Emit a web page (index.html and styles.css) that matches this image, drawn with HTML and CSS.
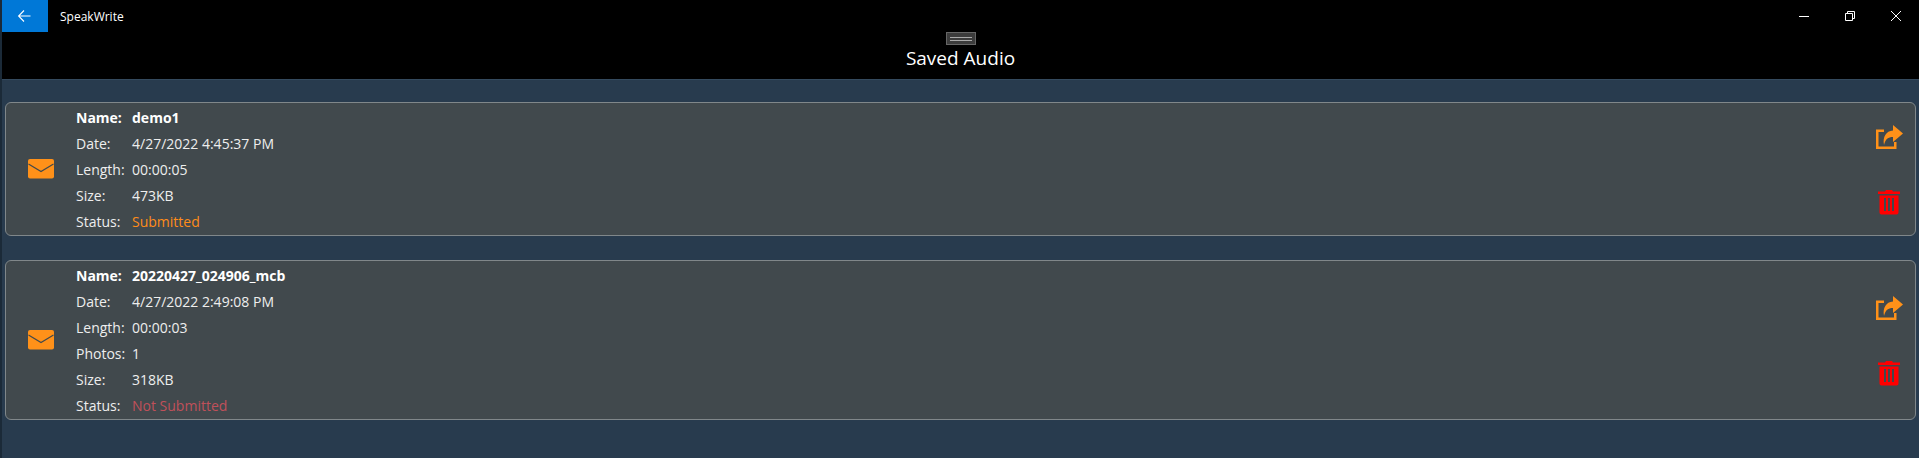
FILE: index.html
```html
<!DOCTYPE html>
<html lang="en">
<head>
<meta charset="utf-8">
<title>SpeakWrite</title>
<link rel="stylesheet" href="styles.css">
</head>
<body>
<div class="app">
  <header class="header">
    <div class="titlebar">
      <button class="back" aria-label="Back">
        <svg width="16" height="16" viewBox="0 0 16 16"><path d="M7 2.5 1.6 8 7 13.5M1.8 8H13.5" fill="none" stroke="#fff" stroke-width="1.1"/></svg>
      </button>
      <span class="app-name">SpeakWrite</span>
      <div class="win-controls">
        <svg class="win-icon" width="12" height="12" viewBox="0 0 12 12"><path d="M1 6.5H11" stroke="#fff" stroke-width="1"/></svg>
        <svg class="win-icon" width="12" height="12" viewBox="0 0 12 12"><path d="M1.5 3.5H8.5V10.5H1.5ZM3.5 3.5V1.5H10.5V8.5H8.5" fill="none" stroke="#fff" stroke-width="1"/></svg>
        <svg class="win-icon" width="12" height="12" viewBox="0 0 12 12"><path d="M1 1 11 11M11 1 1 11" stroke="#fff" stroke-width="1"/></svg>
      </div>
    </div>
    <div class="page-head">
      <div class="grip"><span class="grip-lines"></span></div>
      <h1 class="page-title">Saved Audio</h1>
    </div>
  </header>
  <main class="list">
    <section class="card">
      <div class="mail">
        <svg width="26" height="20" viewBox="0 0 26 20"><rect width="26" height="19.5" rx="2" fill="#ff9119"/><path d="M0.5 5 13 12.5 25.5 5" fill="none" stroke="#41494d" stroke-width="1.2"/></svg>
      </div>
      <dl class="info">
        <div class="row strong"><dt>Name:</dt><dd>demo1</dd></div>
        <div class="row"><dt>Date:</dt><dd>4/27/2022 4:45:37 PM</dd></div>
        <div class="row"><dt>Length:</dt><dd>00:00:05</dd></div>
        <div class="row"><dt>Size:</dt><dd>473KB</dd></div>
        <div class="row"><dt>Status:</dt><dd class="ok">Submitted</dd></div>
      </dl>
      <div class="actions">
        <svg class="share" width="30" height="26" viewBox="0 0 30 26"><path d="M2 5.5H10V8H4.5V22.5H20V18H22.500V25H2Z" fill="#ff9119"/><path d="M19 1 29 9.500 19 18V13C14 13 11.500 15 10 21 8.500 13 12 7 19 6.500Z" fill="#ff9119"/></svg>
        <svg class="trash" width="22" height="26" viewBox="0 0 22 26"><path d="M8 1H14L15 2.500H22V5H0V2.500H7ZM1.500 6.500H20.500V23.500Q20.500 25.500 18.500 25.500H3.500Q1.500 25.500 1.500 23.500ZM6 9V22H8V9ZM10 9V22H12V9ZM14 9V22H16V9Z" fill="#f00" fill-rule="evenodd"/></svg>
      </div>
    </section>
    <section class="card">
      <div class="mail">
        <svg width="26" height="20" viewBox="0 0 26 20"><rect width="26" height="19.5" rx="2" fill="#ff9119"/><path d="M0.5 5 13 12.5 25.5 5" fill="none" stroke="#41494d" stroke-width="1.2"/></svg>
      </div>
      <dl class="info">
        <div class="row strong"><dt>Name:</dt><dd>20220427_024906_mcb</dd></div>
        <div class="row"><dt>Date:</dt><dd>4/27/2022 2:49:08 PM</dd></div>
        <div class="row"><dt>Length:</dt><dd>00:00:03</dd></div>
        <div class="row"><dt>Photos:</dt><dd>1</dd></div>
        <div class="row"><dt>Size:</dt><dd>318KB</dd></div>
        <div class="row"><dt>Status:</dt><dd class="bad">Not Submitted</dd></div>
      </dl>
      <div class="actions">
        <svg class="share" width="30" height="26" viewBox="0 0 30 26"><path d="M2 5.500H10V8H4.500V22.500H20V18H22.500V25H2Z" fill="#ff9119"/><path d="M19 1 29 9.500 19 18V13C14 13 11.500 15 10 21 8.500 13 12 7 19 6.500Z" fill="#ff9119"/></svg>
        <svg class="trash" width="22" height="26" viewBox="0 0 22 26"><path d="M8 1H14L15 2.500H22V5H0V2.500H7ZM1.500 6.500H20.500V23.500Q20.500 25.500 18.500 25.500H3.500Q1.500 25.500 1.500 23.500ZM6 9V22H8V9ZM10 9V22H12V9ZM14 9V22H16V9Z" fill="#f00" fill-rule="evenodd"/></svg>
      </div>
    </section>
  </main>
</div>
</body>
</html>
```
FILE: styles.css
```css
* { box-sizing: border-box; }
html, body { margin: 0; height: 100%; overflow: hidden; }
body { background: #1b2a38; font-family: "Open Sans", "Noto Sans", sans-serif; color: #fff; }
.app { margin-left: 2px; height: 458px; background: #283b4e; display: flex; flex-direction: column; }
.header { height: 80px; background: #000; border-bottom: 1px solid #344a5e; }
.titlebar { height: 32px; display: flex; align-items: center; }
.back { width: 46px; height: 32px; background: #0078d7; border: 0; padding: 0; display: flex; align-items: center; justify-content: center; }
.app-name { margin-left: 12px; font-size: 12px; color: #fff; }
.win-controls { margin-left: auto; display: flex; }
.win-icon { width: 46px; padding: 0 17px; }
.page-head { display: flex; flex-direction: column; align-items: center; }
.grip { width: 30px; height: 13px; background: #3c3c3c; border: 1px solid #666; display: flex; align-items: center; justify-content: center; }
.grip-lines { width: 22px; height: 4px; border-top: 1px solid #aaa; border-bottom: 1px solid #aaa; }
.page-title { margin: 0; font-size: 19px; font-weight: 400; line-height: 26px; }
.list { padding: 22px 3px 0; display: flex; flex-direction: column; gap: 24px; }
.card { display: flex; align-items: center; background: #41494d; border: 1px solid #80878a; border-radius: 6px; padding: 1px 0; }
.mail { width: 70px; padding-left: 22px; display: flex; }
.mail svg { display: block; }
.info { margin: 0; flex: 1; font-size: 14px; }
.row { display: flex; height: 26px; align-items: center; }
.row dt { width: 56px; color: #eee; }
.row dd { margin: 0; color: #eee; }
.strong dt, .strong dd { font-weight: 700; color: #fff; }
.ok { color: #ff8c19 !important; }
.bad { color: #c0505a !important; }
.actions { width: 60px; display: flex; flex-direction: column; align-items: center; gap: 39px; padding-left: 8px; }
.share, .trash { display: block; }
```
